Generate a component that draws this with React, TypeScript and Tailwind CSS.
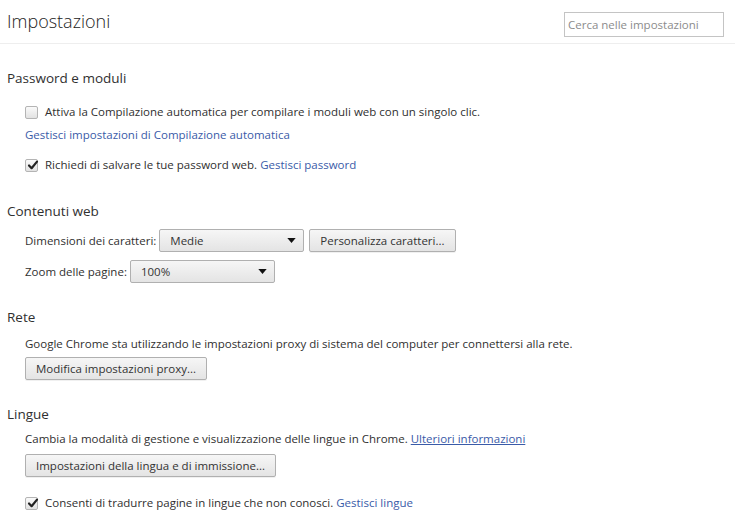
import React from 'react';

const font = { fontFamily: '"Open Sans", "Noto Sans", sans-serif' };

function Checkbox({ checked }: { checked?: boolean }) {
  return (
    <span className="relative inline-flex h-[13px] w-[13px] shrink-0 items-center justify-center rounded-[2px] border border-[#b4b4b4] bg-gradient-to-b from-[#fafafa] to-[#e2e2e2]">
      {checked && (
        <svg viewBox="0 0 12 12" className="absolute left-[1px] top-[-1px] h-[12px] w-[12px]">
          <path d="M2 6.5 L4.6 9.2 L10 2.6" fill="none" stroke="#222" strokeWidth="2.2" strokeLinecap="round" strokeLinejoin="round" />
        </svg>
      )}
    </span>
  );
}

function Select({ value, width }: { value: string; width: string }) {
  return (
    <div className={`flex h-[23px] ${width} items-center justify-between rounded-[2px] border border-[#b0b0b0] bg-gradient-to-b from-[#f6f6f6] to-[#e4e4e4] pl-[10px] pr-[7px] text-[#333]`}>
      <span>{value}</span>
      <svg viewBox="0 0 10 6" className="h-[5px] w-[9px]">
        <path d="M0 0 H10 L5 6 Z" fill="#111" />
      </svg>
    </div>
  );
}

function Button({ children }: { children: React.ReactNode }) {
  return (
    <button className="h-[23px] rounded-[2px] border border-[#b0b0b0] bg-gradient-to-b from-[#f6f6f6] to-[#e4e4e4] px-[10px] text-[#333] shadow-[0_1px_0_rgba(0,0,0,0.06)]">
      {children}
    </button>
  );
}

function SectionTitle({ children }: { children: React.ReactNode }) {
  return <h3 className="text-[13.5px] leading-[18px] text-[#303030]">{children}</h3>;
}

const link = 'text-[#3a5ba8]';

export default function App() {
  return (
    <div className="min-h-screen w-[753px] bg-white text-[11.5px] leading-[16px] text-[#303030]" style={font}>
      <header className="mr-[18px] flex items-start justify-between border-b border-[#eeeeee] pb-[6px] pl-[7px] pt-[9px]">
        <h1 className="text-[18px] leading-[24px] font-light text-[#222]">Impostazioni</h1>
        <div className="mr-[11px] mt-[3px] flex h-[25px] w-[160px] items-center border border-[#c4c4c4] px-[3px] text-[#8c8c8c]">
          Cerca nelle impostazioni
        </div>
      </header>

      <div className="pl-[7px]">
        <section className="pt-[25px]">
          <SectionTitle>Password e moduli</SectionTitle>
          <div className="pl-[18px]">
            <label className="mt-[17px] flex items-center gap-[7px]">
              <Checkbox />
              <span>Attiva la Compilazione automatica per compilare i moduli web con un singolo clic.</span>
            </label>
            <a className={`mt-[7px] block ${link}`}>Gestisci impostazioni di Compilazione automatica</a>
            <label className="mt-[14px] flex items-center gap-[7px]">
              <Checkbox checked />
              <span>
                Richiedi di salvare le tue password web. <a className={link}>Gestisci password</a>
              </span>
            </label>
          </div>
        </section>

        <section className="pt-[29px]">
          <SectionTitle>Contenuti web</SectionTitle>
          <div className="pl-[18px]">
            <div className="mt-[9px] flex items-center gap-[5px]">
              <span className="mr-[-2px]">Dimensioni dei caratteri:</span>
              <Select value="Medie" width="w-[145px]" />
              <Button>Personalizza caratteri...</Button>
            </div>
            <div className="mt-[8px] flex items-center gap-[3px]">
              <span>Zoom delle pagine:</span>
              <Select value="100%" width="w-[145px]" />
            </div>
          </div>
        </section>

        <section className="pt-[25px]">
          <SectionTitle>Rete</SectionTitle>
          <div className="pl-[18px]">
            <p className="mt-[10px]">Google Chrome sta utilizzando le impostazioni proxy di sistema del computer per connettersi alla rete.</p>
            <div className="mt-[5px]">
              <Button>Modifica impostazioni proxy...</Button>
            </div>
          </div>
        </section>

        <section className="pt-[25px]">
          <SectionTitle>Lingue</SectionTitle>
          <div className="pl-[18px]">
            <p className="mt-[8px]">
              Cambia la modalità di gestione e visualizzazione delle lingue in Chrome.{' '}
              <a className="text-[#3a5ba8] underline">Ulteriori informazioni</a>
            </p>
            <div className="mt-[7px]">
              <Button>Impostazioni della lingua e di immissione...</Button>
            </div>
            <label className="mt-[18px] flex items-center gap-[7px]">
              <Checkbox checked />
              <span>
                Consenti di tradurre pagine in lingue che non conosci. <a className={link}>Gestisci lingue</a>
              </span>
            </label>
          </div>
        </section>
      </div>
    </div>
  );
}
